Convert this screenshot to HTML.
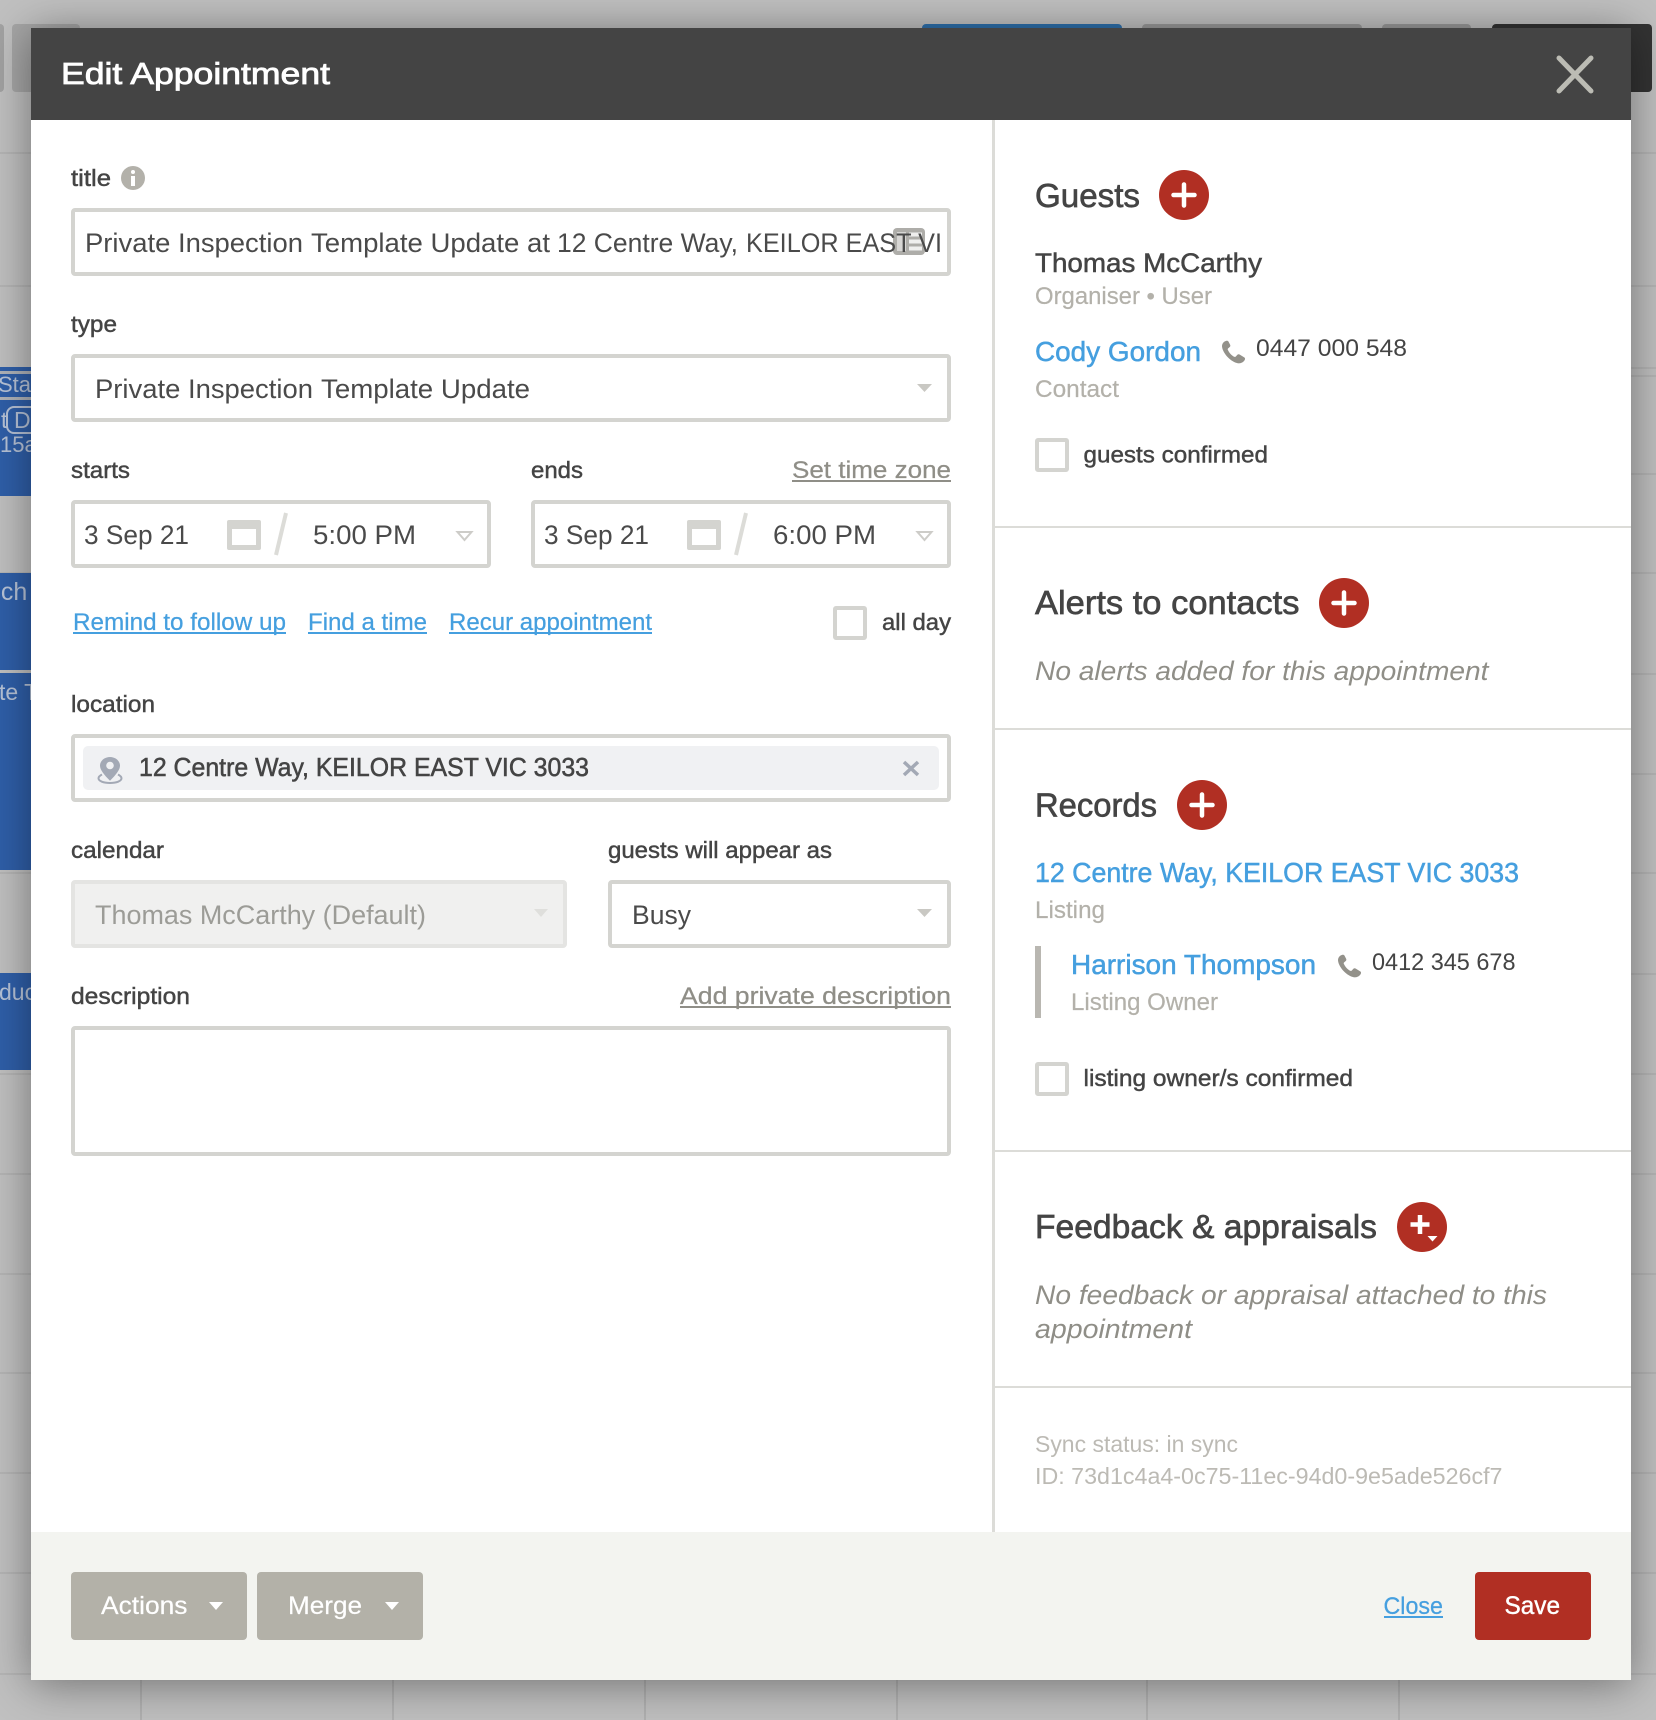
<!DOCTYPE html>
<html lang="en">
<head>
<meta charset="utf-8">
<title>Edit Appointment</title>
<style>
html,body{margin:0;padding:0;}
body{width:1656px;height:1720px;position:relative;overflow:hidden;background:#c0c0c0;font-family:"Liberation Sans",sans-serif;}
.a{position:absolute;box-sizing:border-box;}
.hl{position:absolute;left:0;width:1656px;height:2px;background:#b5b5b5;}
.vl{position:absolute;top:1680px;width:2px;height:40px;background:#b0b0b0;}
.modal{position:absolute;left:31px;top:28px;width:1600px;height:1652px;background:#fff;box-shadow:0 4px 42px rgba(0,0,0,.42);}
.box{position:absolute;box-sizing:border-box;border:4px solid #d4d4d0;border-radius:4px;background:#fff;}
.cb{position:absolute;box-sizing:border-box;border:4px solid #d4d4d0;border-radius:3px;background:#fff;width:34px;height:34px;}
.div{position:absolute;left:995px;width:636px;height:2px;background:#dcdcd8;}
svg.t{position:absolute;left:0;top:0;}
svg text{font-family:"Liberation Sans",sans-serif;fill:#444;}
.m{stroke:#444;stroke-width:.5px;}
.lb{font-size:23px;fill:#444;stroke:#444;stroke-width:.45px;}
.in{font-size:27px;fill:#4a4a4a;}
.h{font-size:33px;fill:#444;stroke:#444;stroke-width:.65px;}
.gr{font-size:24px;fill:#b3b1aa;stroke:#b3b1aa;stroke-width:.2px;}
.bl{font-size:28px;fill:#459fdf;stroke:#459fdf;stroke-width:.5px;}
.lk{font-size:24px;fill:#459fdf;stroke:#459fdf;stroke-width:.25px;}
.gl{font-size:24px;fill:#8f8e87;stroke:#8f8e87;stroke-width:.25px;}
.it{font-size:27px;font-style:italic;fill:#8f8e87;}
.sy{font-size:23px;fill:#bcbab4;}
</style>
</head>
<body>
<!-- background calendar -->
<div class="a" style="left:0;top:24px;width:4px;height:68px;background:#a2a2a2;border-radius:0 4px 4px 0"></div>
<div class="a" style="left:12px;top:24px;width:68px;height:68px;background:#a6a6a6;border-radius:4px"></div>
<div class="a" style="left:922px;top:24px;width:200px;height:40px;background:#2e70ad;border-radius:4px 4px 0 0"></div>
<div class="a" style="left:1142px;top:24px;width:220px;height:40px;background:#9a9a9a;border-radius:4px 4px 0 0"></div>
<div class="a" style="left:1382px;top:24px;width:89px;height:40px;background:#9a9a9a;border-radius:4px 4px 0 0"></div>
<div class="a" style="left:1492px;top:24px;width:160px;height:68px;background:#333;border-radius:4px"></div>
<div class="hl" style="top:152px"></div><div class="hl" style="top:285px"></div><div class="hl" style="top:367px"></div><div class="hl" style="top:375px"></div><div class="hl" style="top:473px"></div><div class="hl" style="top:572px"></div><div class="hl" style="top:673px"></div><div class="hl" style="top:773px"></div><div class="hl" style="top:872px"></div><div class="hl" style="top:973px"></div><div class="hl" style="top:1073px"></div><div class="hl" style="top:1173px"></div><div class="hl" style="top:1273px"></div><div class="hl" style="top:1372px"></div><div class="hl" style="top:1472px"></div><div class="hl" style="top:1572px"></div><div class="hl" style="top:1673px"></div>
<div class="vl" style="left:140px"></div><div class="vl" style="left:392px"></div><div class="vl" style="left:644px"></div><div class="vl" style="left:896px"></div><div class="vl" style="left:1146px"></div><div class="vl" style="left:1398px"></div>
<!-- blue events -->
<div class="a" style="left:0;top:367px;width:31px;height:129px;background:#2f5fa9"></div>
<div class="a" style="left:0;top:371px;width:31px;height:3px;background:#b0b4ba"></div>
<div class="a" style="left:0;top:397px;width:31px;height:3px;background:#b0b4ba"></div>
<div class="a" style="left:0;top:573px;width:31px;height:97px;background:#2f5fa9"></div>
<div class="a" style="left:0;top:673px;width:31px;height:197px;background:#2f5fa9"></div>
<div class="a" style="left:0;top:973px;width:31px;height:97px;background:#2f5fa9"></div>
<svg class="t" width="31" height="1100" viewBox="0 0 31 1100" style="z-index:0">
<rect x="7" y="407" width="30" height="26" rx="7" fill="none" stroke="#b8c4d8" stroke-width="2"/>
<text x="-2" y="392" font-size="22" style="fill:#b8c4d8">Star</text>
<text x="1" y="428" font-size="23" style="fill:#b8c4d8">t</text>
<text x="14" y="428" font-size="23" style="fill:#b8c4d8">D</text>
<text x="0" y="452" font-size="22" style="fill:#b8c4d8">15a</text>
<text x="-13" y="600" font-size="25" style="fill:#b8c4d8">nch</text>
<text x="-1" y="700" font-size="23" style="fill:#b8c4d8">te T</text>
<text x="-1" y="1000" font-size="23" style="fill:#b8c4d8">duc</text>
</svg>

<div class="modal"></div>
<div class="a" style="left:31px;top:28px;width:1600px;height:92px;background:#444"></div>
<div class="a" style="left:992px;top:120px;width:3px;height:1412px;background:#dcdcd8"></div>
<div class="div" style="top:526px"></div>
<div class="div" style="top:728px"></div>
<div class="div" style="top:1150px"></div>
<div class="div" style="top:1386px"></div>
<div class="a" style="left:31px;top:1532px;width:1600px;height:148px;background:#f3f4f0"></div>

<!-- form boxes -->
<div class="box" style="left:71px;top:208px;width:880px;height:68px"></div>
<div class="box" style="left:71px;top:354px;width:880px;height:68px"></div>
<div class="box" style="left:71px;top:500px;width:420px;height:68px"></div>
<div class="box" style="left:531px;top:500px;width:420px;height:68px"></div>
<div class="cb" style="left:833px;top:606px"></div>
<div class="box" style="left:71px;top:734px;width:880px;height:68px"></div>
<div class="a" style="left:83px;top:746px;width:856px;height:44px;background:#f0f1f3;border-radius:5px"></div>
<div class="box" style="left:71px;top:880px;width:496px;height:68px;background:#f0f0ef;border-color:#e4e4e2"></div>
<div class="box" style="left:608px;top:880px;width:343px;height:68px"></div>
<div class="box" style="left:71px;top:1026px;width:880px;height:130px"></div>
<div class="cb" style="left:1035px;top:438px"></div>
<div class="cb" style="left:1035px;top:1062px"></div>
<div class="a" style="left:1035px;top:946px;width:6px;height:72px;background:#b9b7b1"></div>
<div class="a" style="left:71px;top:1572px;width:176px;height:68px;background:#b3b1a8;border-radius:4px"></div>
<div class="a" style="left:257px;top:1572px;width:166px;height:68px;background:#b3b1a8;border-radius:4px"></div>
<div class="a" style="left:1475px;top:1572px;width:116px;height:68px;background:#b12f23;border-radius:4px"></div>

<svg class="t" width="1656" height="1720" viewBox="0 0 1656 1720">
<defs>
<g id="phone" transform="scale(1.08)"><path d="M5 1.2C2.6 1.8 .6 4 1 7c.9 6.300 8.500 14 14.500 15 2.600.4 5.600-1 6.600-3.400.4-.9.1-1.500-.6-2l-4.300-2.700c-.7-.4-1.400-.4-2 .2l-1.600 1.700c-.4.4-.9.4-1.400.2-2.400-1.200-4.800-3.900-5.900-6.500-.2-.5-.1-.9.3-1.300l1.500-1.300c.6-.5.7-1.200.4-1.900L6.900 1.900C6.500 1.200 5.800 1 5 1.200z" fill="#93918a"/></g>
<g id="plus"><circle r="25" fill="#b12f23"/><path d="M0-10.500V10.500M-10.500 0H10.500" stroke="#fff" stroke-width="4.500" stroke-linecap="round"/></g>
<g id="cal"><path fill-rule="evenodd" d="M2 0h30a2 2 0 0 1 2 2v26a2 2 0 0 1-2 2H2a2 2 0 0 1-2-2V2a2 2 0 0 1 2-2zM5 9v16h24V9z" fill="#d4d4d0"/></g>
</defs>

<!-- header -->
<text x="61" y="84" font-size="31" textLength="269" lengthAdjust="spacingAndGlyphs" style="fill:#fff;stroke:#fff;stroke-width:.8px">Edit Appointment</text>
<path d="M1559 58L1591 91M1591 58L1559 91" stroke="#bcbcb4" stroke-width="5" stroke-linecap="round"/>

<!-- title -->
<text class="lb" x="71" y="186" textLength="40" lengthAdjust="spacingAndGlyphs">title</text>
<circle cx="133" cy="178" r="12" fill="#b3b1aa"/>
<rect x="131" y="176" width="4" height="10" fill="#fff"/><rect x="131" y="170" width="4" height="4" rx="2" fill="#fff"/>
<g><rect x="893" y="228" width="32" height="27" rx="4" fill="#aeada9"/><rect x="897" y="232" width="9" height="19" fill="#fff" opacity=".5"/><rect x="909" y="232.500" width="13" height="4" fill="#fff" opacity=".8"/><rect x="909" y="239.500" width="13" height="4" fill="#fff" opacity=".8"/><rect x="909" y="246.500" width="13" height="4" fill="#fff" opacity=".8"/></g>
<text class="in" x="85" y="252" textLength="218" lengthAdjust="spacingAndGlyphs">Private Inspection</text>
<text class="in" x="311" y="252" textLength="239" lengthAdjust="spacingAndGlyphs">Template Update at</text>
<text class="in" x="557" y="252" textLength="181" lengthAdjust="spacingAndGlyphs">12 Centre Way,</text>
<text class="in" x="746" y="252" textLength="196" lengthAdjust="spacingAndGlyphs">KEILOR EAST VI</text>

<!-- type -->
<text class="lb" x="71" y="332" textLength="46" lengthAdjust="spacingAndGlyphs">type</text>
<text class="in" x="95" y="398" textLength="218" lengthAdjust="spacingAndGlyphs">Private Inspection</text>
<text class="in" x="321" y="398" textLength="209" lengthAdjust="spacingAndGlyphs">Template Update</text>
<path d="M917 384H932L924.500 392Z" fill="#c9c8c3"/>

<!-- starts / ends -->
<text class="lb" x="71" y="478" textLength="59" lengthAdjust="spacingAndGlyphs">starts</text>
<text class="lb" x="531" y="478" textLength="52" lengthAdjust="spacingAndGlyphs">ends</text>
<text class="gl" x="792" y="478" textLength="159" lengthAdjust="spacingAndGlyphs">Set time zone</text>
<rect x="792" y="480" width="159" height="2" fill="#8f8e87"/>

<text class="in" x="84" y="544" textLength="105" lengthAdjust="spacingAndGlyphs">3 Sep 21</text>
<use href="#cal" x="227" y="520"/>
<path d="M286 513L276 555" stroke="#dcdcd8" stroke-width="4"/>
<text class="in" x="313" y="544" textLength="103" lengthAdjust="spacingAndGlyphs">5:00 PM</text>
<path d="M457.500 532H471.500L464.500 540Z" fill="none" stroke="#cdccc8" stroke-width="2"/>

<text class="in" x="544" y="544" textLength="105" lengthAdjust="spacingAndGlyphs">3 Sep 21</text>
<use href="#cal" x="687" y="520"/>
<path d="M746 513L736 555" stroke="#dcdcd8" stroke-width="4"/>
<text class="in" x="773" y="544" textLength="103" lengthAdjust="spacingAndGlyphs">6:00 PM</text>
<path d="M917.500 532H931.500L924.500 540Z" fill="none" stroke="#cdccc8" stroke-width="2"/>

<!-- links -->
<text class="lk" x="73" y="630" textLength="213" lengthAdjust="spacingAndGlyphs">Remind to follow up</text>
<rect x="73" y="632" width="213" height="2" fill="#459fdf"/>
<text class="lk" x="308" y="630" textLength="119" lengthAdjust="spacingAndGlyphs">Find a time</text>
<rect x="308" y="632" width="119" height="2" fill="#459fdf"/>
<text class="lk" x="449" y="630" textLength="203" lengthAdjust="spacingAndGlyphs">Recur appointment</text>
<rect x="449" y="632" width="203" height="2" fill="#459fdf"/>
<text class="lb" x="882" y="630" textLength="69" lengthAdjust="spacingAndGlyphs">all day</text>

<!-- location -->
<text class="lb" x="71" y="712" textLength="84" lengthAdjust="spacingAndGlyphs">location</text>
<path fill-rule="evenodd" d="M110 757c-5.500 0-10 3.800-10 8.800 0 4 4 9 10 15 6-6 10-11 10-15 0-5-4.500-8.800-10-8.800zm0 4.700a3.800 3.800 0 1 1 0 7.600 3.800 3.800 0 0 1 0-7.600z" fill="#a3a9b5"/>
<path d="M102 774.500c-2 1-3.500 2.300-3.500 3.800 0 2.800 5 4.700 11.500 4.700s11.500-1.900 11.500-4.700c0-1.500-1.500-2.800-3.500-3.800" fill="none" stroke="#a3a9b5" stroke-width="2"/>
<text class="in" x="139" y="776" textLength="450" lengthAdjust="spacingAndGlyphs" style="font-size:26px;fill:#444;stroke:#444;stroke-width:.55px">12 Centre Way, KEILOR EAST VIC 3033</text>
<path d="M904 762L918 775M918 762L904 775" stroke="#a3a9b5" stroke-width="3.500"/>

<!-- calendar -->
<text class="lb" x="71" y="858" textLength="93" lengthAdjust="spacingAndGlyphs">calendar</text>
<text class="lb" x="608" y="858" textLength="224" lengthAdjust="spacingAndGlyphs">guests will appear as</text>
<text class="in" x="95" y="924" textLength="331" lengthAdjust="spacingAndGlyphs" style="fill:#9c9c97">Thomas McCarthy (Default)</text>
<path d="M534 909H548L541 917Z" fill="#dfdfdc"/>
<text class="in" x="632" y="924" textLength="59" lengthAdjust="spacingAndGlyphs">Busy</text>
<path d="M917 909H932L924.500 917Z" fill="#c9c8c3"/>

<!-- description -->
<text class="lb" x="71" y="1004" textLength="119" lengthAdjust="spacingAndGlyphs">description</text>
<text class="gl" x="680" y="1004" textLength="271" lengthAdjust="spacingAndGlyphs">Add private description</text>
<rect x="680" y="1006" width="271" height="2" fill="#8f8e87"/>

<!-- guests -->
<text class="h" x="1035" y="207" textLength="105" lengthAdjust="spacingAndGlyphs">Guests</text>
<use href="#plus" x="1184" y="195"/>
<text x="1035" y="272" font-size="27" class="m" textLength="227" lengthAdjust="spacingAndGlyphs">Thomas McCarthy</text>
<text class="gr" x="1035" y="304" textLength="177" lengthAdjust="spacingAndGlyphs">Organiser • User</text>
<text class="bl" x="1035" y="361" textLength="166" lengthAdjust="spacingAndGlyphs">Cody Gordon</text>
<use href="#phone" x="1221" y="339.500"/>
<text x="1256" y="356" font-size="24" textLength="151" lengthAdjust="spacingAndGlyphs">0447 000 548</text>
<text class="gr" x="1035" y="397" textLength="84" lengthAdjust="spacingAndGlyphs">Contact</text>
<text class="lb" x="1083.500" y="462.500" textLength="184.500" lengthAdjust="spacingAndGlyphs">guests confirmed</text>

<!-- alerts -->
<text class="h" x="1035" y="614" textLength="264.500" lengthAdjust="spacingAndGlyphs">Alerts to contacts</text>
<use href="#plus" x="1344" y="603"/>
<text class="it" x="1035" y="680" textLength="453.500" lengthAdjust="spacingAndGlyphs">No alerts added for this appointment</text>

<!-- records -->
<text class="h" x="1035" y="816.500" textLength="122" lengthAdjust="spacingAndGlyphs">Records</text>
<use href="#plus" x="1202" y="805"/>
<text class="bl" x="1035" y="882" textLength="484" lengthAdjust="spacingAndGlyphs">12 Centre Way, KEILOR EAST VIC 3033</text>
<text class="gr" x="1035" y="918" textLength="70" lengthAdjust="spacingAndGlyphs">Listing</text>
<text class="bl" x="1071" y="974" textLength="245" lengthAdjust="spacingAndGlyphs">Harrison Thompson</text>
<use href="#phone" x="1337" y="953.500"/>
<text x="1372" y="970" font-size="24" textLength="143.500" lengthAdjust="spacingAndGlyphs">0412 345 678</text>
<text class="gr" x="1071" y="1010" textLength="147" lengthAdjust="spacingAndGlyphs">Listing Owner</text>
<text class="lb" x="1083.500" y="1086" textLength="269.500" lengthAdjust="spacingAndGlyphs">listing owner/s confirmed</text>

<!-- feedback -->
<text class="h" x="1035" y="1238" textLength="342" lengthAdjust="spacingAndGlyphs">Feedback &amp; appraisals</text>
<circle cx="1422" cy="1227" r="25" fill="#b12f23"/>
<path d="M1420 1215V1234M1410.500 1224.500H1429.500" stroke="#fff" stroke-width="4.500"/>
<path d="M1427.500 1236H1437.500L1432.500 1241.500Z" fill="#fff"/>
<text class="it" x="1035" y="1304" textLength="512" lengthAdjust="spacingAndGlyphs">No feedback or appraisal attached to this</text>
<text class="it" x="1035" y="1338" textLength="157" lengthAdjust="spacingAndGlyphs">appointment</text>

<!-- sync -->
<text class="sy" x="1035" y="1452" textLength="203" lengthAdjust="spacingAndGlyphs">Sync status: in sync</text>
<text class="sy" x="1035" y="1484" textLength="467.500" lengthAdjust="spacingAndGlyphs">ID: 73d1c4a4-0c75-11ec-94d0-9e5ade526cf7</text>

<!-- footer -->
<text x="101" y="1614" font-size="25" textLength="86.500" lengthAdjust="spacingAndGlyphs" style="fill:#fff;stroke:#fff;stroke-width:.2px">Actions</text>
<path d="M209 1602H223L216 1610Z" fill="#fff"/>
<text x="288" y="1614" font-size="25" textLength="74" lengthAdjust="spacingAndGlyphs" style="fill:#fff;stroke:#fff;stroke-width:.2px">Merge</text>
<path d="M385 1602H399L392 1610Z" fill="#fff"/>
<text class="lk" x="1383.500" y="1614" textLength="59.500" lengthAdjust="spacingAndGlyphs">Close</text>
<rect x="1384" y="1616" width="59" height="2" fill="#459fdf"/>
<text x="1504.500" y="1614" font-size="25" textLength="55.500" lengthAdjust="spacingAndGlyphs" style="fill:#fff;stroke:#fff;stroke-width:.45px">Save</text>
</svg>
</body>
</html>
